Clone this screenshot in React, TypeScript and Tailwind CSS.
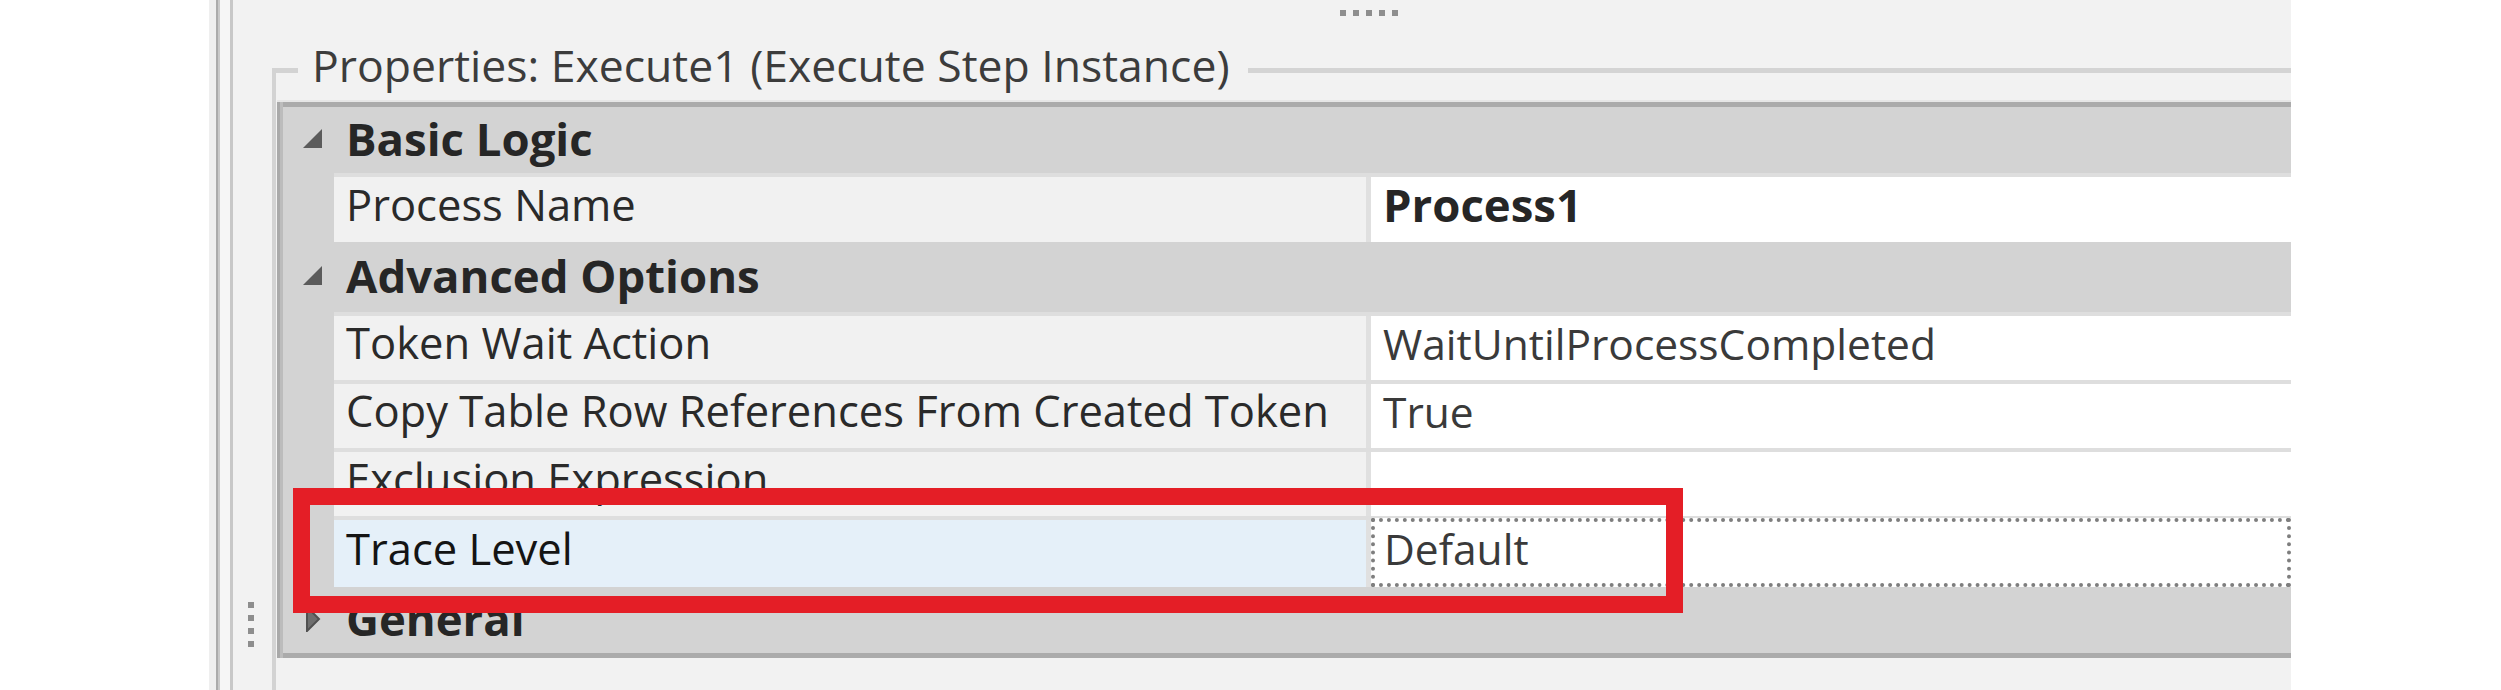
import React from 'react';

type Row =
  | { kind: 'cat'; label: string; open: boolean; h: string }
  | { kind: 'prop'; label: string; value: string; strong?: boolean; selected?: boolean; h: string };

const rows: Row[] = [
  { kind: 'cat', label: 'Basic Logic', open: true, h: 'h-[66px]' },
  { kind: 'prop', label: 'Process Name', value: 'Process1', strong: true, h: 'h-[69px]' },
  { kind: 'cat', label: 'Advanced Options', open: true, h: 'h-[70px]' },
  { kind: 'prop', label: 'Token Wait Action', value: 'WaitUntilProcessCompleted', h: 'h-[68px]' },
  { kind: 'prop', label: 'Copy Table Row References From Created Token', value: 'True', h: 'h-[68px]' },
  { kind: 'prop', label: 'Exclusion Expression', value: '', h: 'h-[68px]' },
  { kind: 'prop', label: 'Trace Level', value: 'Default', selected: true, h: 'h-[71px]' },
  { kind: 'cat', label: 'General', open: false, h: 'h-[66px]' },
];

function Glyph({ open }: { open: boolean }) {
  if (open) {
    return (
      <svg width="19" height="19" viewBox="0 0 19 19" className="shrink-0">
        <polygon points="0,19 19,19 19,0" fill="#5b5b5b" />
      </svg>
    );
  }
  return (
    <svg width="19" height="26" viewBox="0 0 19 26" className="shrink-0">
      <polygon points="4,1 16,13 4,25" fill="#6e6e6e" stroke="#505050" strokeWidth="2" />
    </svg>
  );
}

function Dots({ vertical }: { vertical?: boolean }) {
  const count = vertical ? 4 : 5;
  return (
    <div className={vertical ? 'flex flex-col gap-[7px]' : 'flex gap-[7px]'}>
      {Array.from({ length: count }).map((_, i) => (
        <div key={i} className="w-[6px] h-[6px] bg-[#8e8e8e]" />
      ))}
    </div>
  );
}

function CategoryRow({ label, open, h }: { label: string; open: boolean; h: string }) {
  return (
    <div className={`${h} flex items-center bg-[#d3d3d3] pl-[20px] pb-[3px]`}>
      <Glyph open={open} />
      <span className="ml-[24px] text-[45.5px] leading-[1.4] font-bold text-[#262626] whitespace-nowrap">{label}</span>
    </div>
  );
}

function PropRow({ label, value, strong, selected, h }: { label: string; value: string; strong?: boolean; selected?: boolean; h: string }) {
  return (
    <div className={`${h} flex`}>
      <div className="w-[51px] shrink-0 bg-[#d3d3d3]" />
      <div className="flex flex-1 border-t-[4px] border-[#dedede]">
        <div
          className={`w-[1032px] shrink-0 flex items-center pl-[12px] pb-[9px] ${
            selected ? 'bg-[#e5f0f9] text-[#141414]' : 'bg-[#f1f1f1] text-[#2a2a2a]'
          }`}
        >
          <span className="text-[43.5px] leading-[1.4] whitespace-nowrap">{label}</span>
        </div>
        <div className="w-[5px] shrink-0 bg-[#e0e0e0]" />
        <div
          className={`flex-1 flex items-center bg-white ${
            selected ? 'border-[4px] border-dotted border-[#7e7e7e] -mt-[2px] pl-[9px] pb-[7px]' : 'pl-[12px] pb-[9px]'
          }`}
        >
          <span
            className={`leading-[1.4] whitespace-nowrap ${
              strong ? 'text-[45.5px] font-bold text-[#262626]' : 'text-[42.5px] text-[#3a3a3a]'
            }`}
          >
            {value}
          </span>
        </div>
      </div>
    </div>
  );
}

export default function App() {
  return (
    <div className="relative w-[2501px] h-[690px] flex bg-white overflow-hidden font-['Open_Sans','Segoe_UI',sans-serif]">
      <div className="w-[209px] shrink-0 bg-white" />
      <div className="w-[2082px] shrink-0 flex bg-[#f2f2f2] overflow-hidden">
        {/* splitter edge */}
        <div className="w-[7px] shrink-0 bg-[#efefef]" />
        <div className="w-[2px] shrink-0 bg-[#ababab]" />
        <div className="w-[2px] shrink-0 bg-[#c9c9c9]" />
        <div className="w-[10px] shrink-0 bg-[#f6f6f6]" />
        <div className="w-[3px] shrink-0 bg-[#c8c8c8]" />
        {/* left grip gutter */}
        <div className="w-[39px] shrink-0 flex flex-col justify-end pl-[15px] pb-[43px]">
          <Dots vertical />
        </div>
        {/* group box */}
        <div className="flex-1 min-w-0 flex flex-col">
          <div className="h-[40px] shrink-0 pl-[1068px] pt-[10px]">
            <Dots />
          </div>
          <div className="h-[60px] shrink-0 flex items-start">
            <div className="w-[26px] h-[32px] shrink-0 mt-[28px] border-t-[5px] border-l-[4px] border-[#d3d3d3]" />
            <span className="ml-[14px] -mt-[6px] text-[44.5px] leading-[1.4] text-[#3c3c3c] whitespace-nowrap">
              Properties: Execute1 (Execute Step Instance)
            </span>
            <div className="flex-1 ml-[18px] mt-[28px] h-[5px] bg-[#d4d4d4]" />
          </div>
          <div className="flex-1 flex border-l-[4px] border-[#d3d3d3]">
            <div className="flex-1 flex flex-col">
              <div className="h-[2px] bg-[#e6e6e6] ml-[1px]" />
              <div className="ml-[1px] flex">
                <div className="w-[3px] shrink-0 bg-[#a9a9a9]" />
                <div className="w-[3px] shrink-0 bg-[#bcbcbc]" />
                <div className="flex-1 border-t-[5px] border-b-[5px] border-[#ababab] flex flex-col">
                  {rows.map((r) =>
                    r.kind === 'cat' ? (
                      <CategoryRow key={r.label} label={r.label} open={r.open} h={r.h} />
                    ) : (
                      <PropRow key={r.label} label={r.label} value={r.value} strong={r.strong} selected={r.selected} h={r.h} />
                    )
                  )}
                </div>
              </div>
            </div>
          </div>
        </div>
      </div>
      <div className="flex-1 bg-white" />
      {/* highlight annotation */}
      <div className="absolute left-[293px] top-[488px] w-[1390px] h-[125px] border-[17px] border-[#e41e26]" />
    </div>
  );
}
